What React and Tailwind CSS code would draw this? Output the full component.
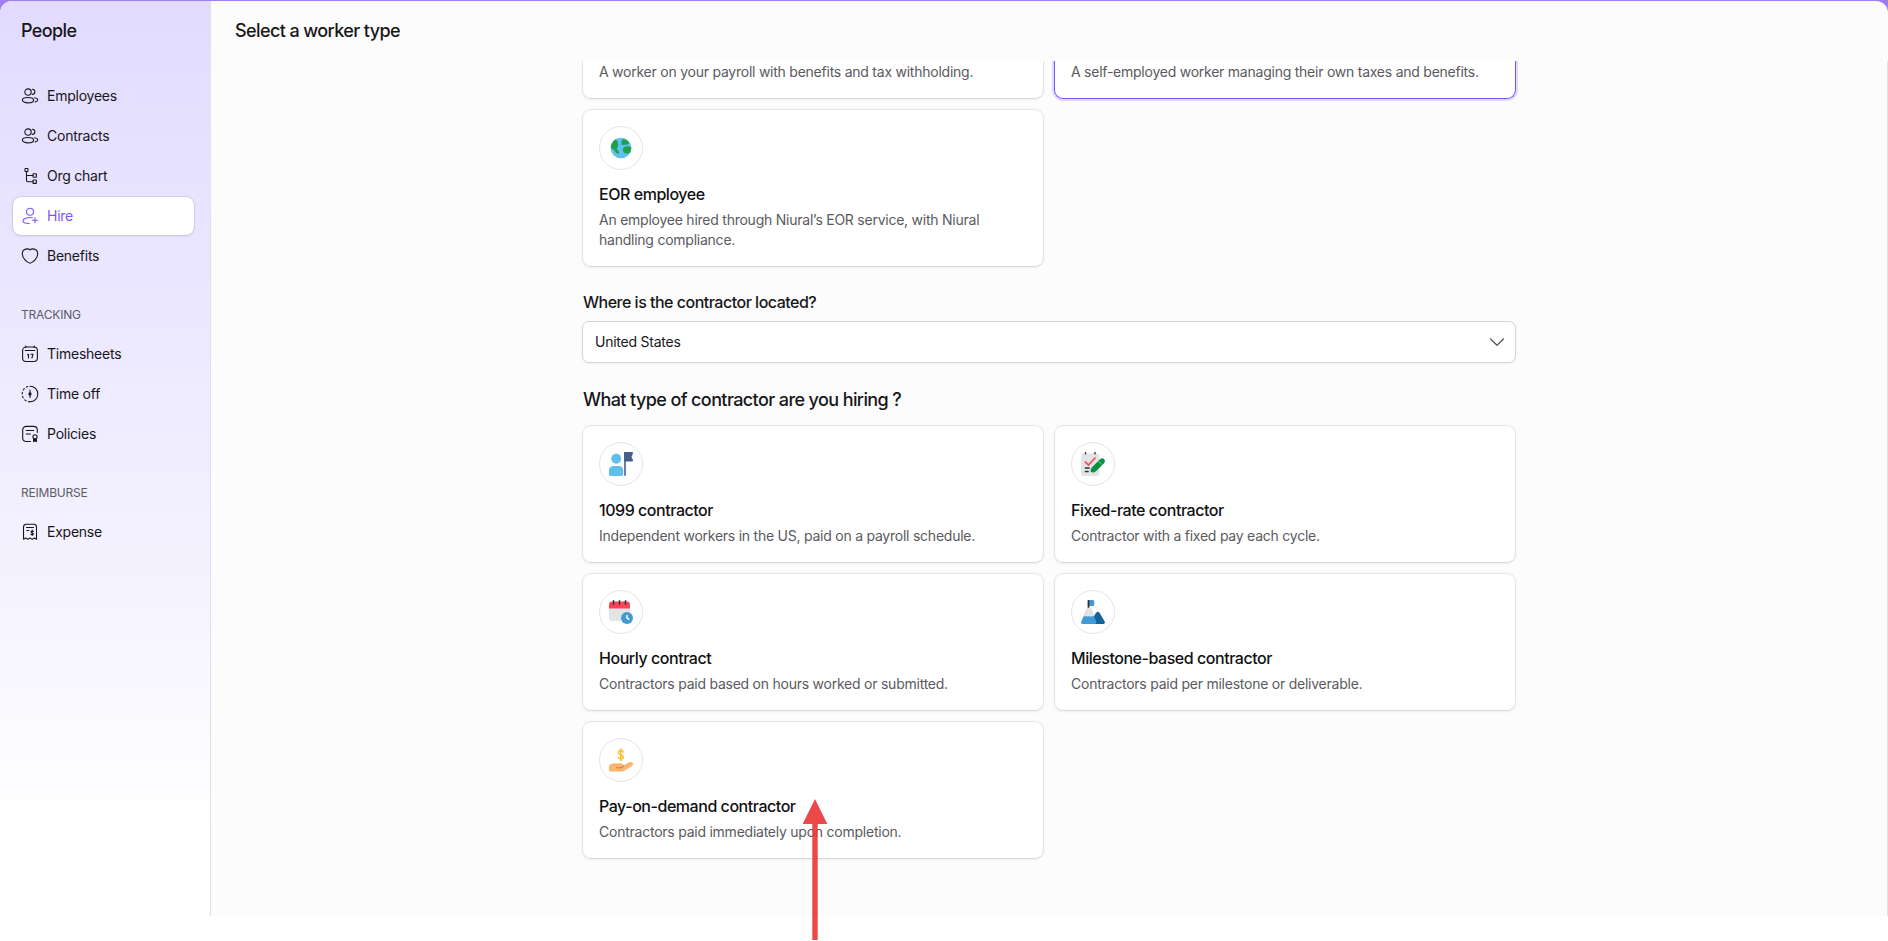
import React from "react";

const StrokeIcon = ({ children }) => (
  <svg
    viewBox="0 0 18 18"
    className="w-[18px] h-[18px] shrink-0"
    fill="none"
    stroke="currentColor"
    strokeWidth="1.1"
    strokeLinecap="round"
    strokeLinejoin="round"
  >
    {children}
  </svg>
);

const PeopleIcon = () => (
  <StrokeIcon>
    <circle cx="7" cy="5.1" r="3.2" />
    <path d="M11.3 2.2a2.6 2.6 0 0 1 0 5.2" />
    <ellipse cx="7" cy="13.2" rx="5.6" ry="2.7" />
    <path d="M13.6 10.8c1.9.3 3.1 1.1 3.1 2.1s-1 1.7-2.6 2" />
  </StrokeIcon>
);

const OrgIcon = () => (
  <StrokeIcon>
    <rect x="4" y="1.5" width="3" height="3" rx=".5" />
    <rect x="12" y="6.8" width="3.4" height="3.4" rx=".5" />
    <rect x="12" y="13" width="3.4" height="3.4" rx=".5" />
    <path d="M5.5 4.5v8.7c0 1 .5 1.5 1.5 1.5h5M5.5 8.5H12" />
  </StrokeIcon>
);

const HireIcon = () => (
  <StrokeIcon>
    <circle cx="9" cy="4.7" r="3.5" />
    <path d="M11.4 10.8a9 9 0 0 0-2.4-.3c-3.9 0-7.1 1.7-7.1 3.6 0 1.6 2.2 2.4 6.4 2.4" />
    <path d="M14 10.6v5.2M11.4 13.2h5.2" />
  </StrokeIcon>
);

const HeartIcon = () => (
  <StrokeIcon>
    <path d="M9 3C7.6 1.4 1.5 1 1.3 6.7c-.1 4.6 4.6 8.6 7.7 9.6 3.1-1 7.8-5 7.7-9.6C16.5 1 10.4 1.4 9 3z" />
  </StrokeIcon>
);

const CalendarIcon = () => (
  <StrokeIcon>
    <rect x="1.6" y="2" width="14.8" height="14.5" rx="3.5" />
    <path d="M4.8 1v1.5M13.2 1v1.5M4.2 5.5h9.6" />
    <path d="M6.5 9.7l1-.5v3.8M10 9.2h2l-1.1 3.8" />
  </StrokeIcon>
);

const TimeOffIcon = () => (
  <StrokeIcon>
    <path d="M9 1.2a7.8 7.8 0 0 1 0 15.6" />
    <path d="M9 16.8A7.8 7.8 0 0 1 9 1.2" strokeDasharray="1.6 2.5" />
    <path d="M9 5v7.5" />
    <circle cx="9" cy="9" r="1.1" fill="currentColor" />
  </StrokeIcon>
);

const PolicyIcon = () => (
  <StrokeIcon>
    <path d="M9.5 16.5h-4C3 16.5 1.7 15.300 1.7 13V5c0-2.400 1.300-3.600 3.800-3.600h7c2.500 0 3.800 1.200 3.800 3.600v2.500" />
    <path d="M5.3 5.500h7.400M5.300 9h4.200" />
    <circle cx="14" cy="11.8" r="2.1" />
    <path d="M12.6 13.800v2.800l1.400-.8 1.400.8v-2.800" fill="currentColor" />
  </StrokeIcon>
);

const ExpenseIcon = () => (
  <StrokeIcon>
    <path d="M2.5 16.200v-12c0-1.900 1-2.900 2.900-2.900h7.200c1.900 0 2.900 1 2.900 2.900v12l-2.100-1.200-2.200 1.400L9 15l-2.200 1.400L4.600 15z" />
    <path d="M5.500 4.500h7M5.800 7.500h2" />
    <path d="M12.300 8.300c-.5-.6-2.300-.5-2.300.5 0 1.200 2.400.7 2.400 2 0 1.100-1.900 1.200-2.500.4M11.200 7v5.400" />
  </StrokeIcon>
);

const GlobeArt = () => (
  <svg viewBox="0 0 24 24" className="w-6 h-6">
    <circle cx="12" cy="12" r="10.3" fill="#5fc0ee" />
    <path
      d="M6.800 3.200C3.800 5 1.900 8 1.700 11.500c.8 1.500 3 1.600 3.800 3 .8 1.300 1.600 3.200 3.800 3.500.9.100 1-2-.1-3.200-.8-1-1.800-1.800-1-3 .6-.8 1.300-2.100.8-4-.2-1.300-.7-3.600-2.200-4.600z"
      fill="#1fa149"
    />
    <path
      d="M14 3.300c-1.400.7-1.600 2.800-1.500 4.400.1 1.400 1.400 1.600 3 1.200 1.700-.5 3.700-.2 5-1.300-1-2.300-3.500-4.600-6.500-4.300z"
      fill="#1fa149"
    />
    <path
      d="M17.800 10.200c-2.400 0-4 1.800-4 3.600 0 2.100 1.700 3.700 4 3.700 1 0 2.200.2 3-.6 1-1.700 1.600-3.700 1.400-6-1.200-.5-2.700-.7-4.400-.7z"
      fill="#1fa149"
    />
  </svg>
);

const PersonFlagArt = () => (
  <svg viewBox="0 0 24 24" className="w-6 h-6">
    <circle cx="7.2" cy="6.8" r="5" fill="#5fc0ee" />
    <path
      d="M0 18.500C0 15.500 1.800 14 4.500 14h5.200c2.700 0 4.500 1.500 4.500 4.500V22c0 1.300-.7 2-2 2H2c-1.300 0-2-.7-2-2z"
      fill="#5fc0ee"
    />
    <rect x="15" y="0" width="2" height="24" rx="1" fill="#6b80a6" />
    <path
      d="M15 1c0-.6.400-1 1-1h7c1 0 1.300.8.900 1.500L22.500 5 24 8.200c.3.700-.1 1.300-.8 1.300H15z"
      fill="#455f8c"
    />
  </svg>
);

const ChecklistArt = () => (
  <svg viewBox="0 0 24 24" className="w-6 h-6" fill="none" strokeLinecap="round">
    <rect x="0" y="1.5" width="18.5" height="22.5" rx="3" fill="#e2e4e6" />
    <path d="M4.500.8v1M14 .8v1" stroke="#2d3138" strokeWidth="1.5" />
    <path d="M4.300 9.800L7.500 13l6.500-7" stroke="#f5495c" strokeWidth="1.7" />
    <path d="M4.500 16h3.500M4.500 19.500H7" stroke="#2d3138" strokeWidth="1.7" />
    <path
      d="M9.800 19.800c-.4-2 .2-3.600 1.500-4.900l7.500-7.400c1.400-1.400 3-1.600 4.300-.3s1.100 2.900-.3 4.300l-7.500 7.400c-1.400 1.300-3.300 2.100-5.500.9z"
      fill="#0b8f45"
    />
    <path d="M17.300 9l3.800 3.800" stroke="#1fbf68" strokeWidth="1.5" strokeLinecap="butt" />
  </svg>
);

const HourlyArt = () => (
  <svg viewBox="0 0 24 24" className="w-6 h-6" fill="none" strokeLinecap="round">
    <path d="M0 8h21v10c0 2-1 3-3 3H3c-2 0-3-1-3-3z" fill="#e2e4e6" />
    <path d="M0 8.500v-4c0-2 1-3 3-3h15c2 0 3 1 3 3v4z" fill="#ff4356" />
    <path d="M4.500.8v3.400M10.500.8v3.400M16.500.8v3.400" stroke="#2d3138" strokeWidth="1.5" />
    <circle cx="18" cy="18" r="6" fill="#4299d3" />
    <path d="M18 15.500V18l1.800 1.200" stroke="#fff" strokeWidth="1.5" />
  </svg>
);

const MilestoneArt = () => (
  <svg viewBox="0 0 24 24" className="w-6 h-6">
    <path
      d="M12 24l-.5-5 3.200-5.800c1.200-2.100 3-2.100 4.100 0l4.700 8c.9 1.600.2 2.800-1.600 2.800z"
      fill="#14629b"
    />
    <path
      d="M.4 21.300L5.300 10c1.200-3 3.800-3 5.200 0l4.600 11.200c.6 1.700-.1 2.800-1.700 2.800H2C.3 24-.4 22.900.4 21.300z"
      fill="#4299d3"
    />
    <path
      d="M5.300 9.500c1.200-3 3.800-3 5.200 0l2.600 6.300c-.7.800-1.900.8-2.700.1-.7.900-1.800.9-2.600.1-.8.800-1.900.8-2.600-.1-.7.600-1.700.7-2.500 0z"
      fill="#e2e4e6"
    />
    <path d="M8 0h3.500c1.300 0 1.700.6 1.700 1.500v3c0 .9-.4 1.500-1.700 1.500H8z" fill="#4299d3" />
    <path d="M6.600.8c0-1 1.800-1 1.800 0v7H6.600z" fill="#2d3138" />
  </svg>
);

const HandCoinArt = () => (
  <svg viewBox="0 0 24 24" className="w-6 h-6" fill="none">
    <path
      d="M14.200 4.500c0-1.100-1-1.900-2.400-1.900s-2.500.8-2.500 2c0 2.700 5 1.500 5 4.200 0 1.300-1.100 2-2.500 2s-2.600-.8-2.600-2M11.800.3v12.600"
      stroke="#fbc02d"
      strokeWidth="1.5"
    />
    <path
      d="M0 18c1.500-2.200 3.700-3 6-2.600 2.200.4 5-.5 6.800.2 1 .4 1.700 1.400 1.600 2l5.600-3.200c1.400-.8 3.500-.4 3.900 1.100.3 1.200-.4 2.100-1.700 2.900l-5.500 3.600c-1.500 1-3 1.600-5 1.600H1.500C.5 23.600 0 23 0 22z"
      fill="#fbb570"
    />
    <path d="M7.500 19.700c2.500.3 5.700.8 7.200-2" stroke="#c98350" strokeWidth="1.1" strokeLinecap="round" />
  </svg>
);

const sections = [
  {
    items: [
      { label: "Employees", icon: PeopleIcon },
      { label: "Contracts", icon: PeopleIcon },
      { label: "Org chart", icon: OrgIcon },
      { label: "Hire", icon: HireIcon, active: true },
      { label: "Benefits", icon: HeartIcon },
    ],
  },
  {
    title: "TRACKING",
    items: [
      { label: "Timesheets", icon: CalendarIcon },
      { label: "Time off", icon: TimeOffIcon },
      { label: "Policies", icon: PolicyIcon },
    ],
  },
  {
    title: "REIMBURSE",
    items: [{ label: "Expense", icon: ExpenseIcon }],
  },
];

const contractorTypes = [
  {
    title: "1099 contractor",
    text: "Independent workers in the US, paid on a payroll schedule.",
    art: PersonFlagArt,
  },
  {
    title: "Fixed-rate contractor",
    text: "Contractor with a fixed pay each cycle.",
    art: ChecklistArt,
  },
  {
    title: "Hourly contract",
    text: "Contractors paid based on hours worked or submitted.",
    art: HourlyArt,
  },
  {
    title: "Milestone-based contractor",
    text: "Contractors paid per milestone or deliverable.",
    art: MilestoneArt,
  },
  {
    title: "Pay-on-demand contractor",
    text: "Contractors paid immediately upon completion.",
    art: HandCoinArt,
  },
];

const Sidebar = () => (
  <aside className="w-[211px] h-[915px] shrink-0 border-r border-[#e2dfec] bg-linear-to-b from-[#e2dbff] from-0% via-[#f4f1ff] via-60% to-white to-90%">
    <h2 className="pl-[21px] pt-[18px] text-[18px] leading-6 font-medium tracking-[-0.6px] text-[#17171a]">
      People
    </h2>
    <nav className="pt-[33px] pl-3 pr-[15px]">
      {sections.map((section, idx) => (
        <div key={idx} className="mb-[29px]">
          {section.title && (
            <div className="pl-[9px] h-[29px] text-xs leading-5 tracking-[-0.2px] text-[#5c5b63]">
              {section.title}
            </div>
          )}
          {section.items.map((item) => (
            <a
              key={item.label}
              className={
                item.active
                  ? "flex items-center h-10 gap-2 pl-2 rounded-[9px] bg-white bg-clip-padding border border-[#d2cbe9] text-sm tracking-[-0.24px] text-[#7c55fb] shadow-[0_1px_2px_rgba(0,0,0,0.06)]"
                  : "flex items-center h-10 gap-2 pl-[9px] text-sm tracking-[-0.24px] text-[#17171a]"
              }
            >
              <item.icon />
              <span>{item.label}</span>
            </a>
          ))}
        </div>
      ))}
    </nav>
  </aside>
);

const TypeCard = ({ title, text, art: Art }) => (
  <div className="bg-white border border-[#e4e4e5] border-b-[#d8d8d9] rounded-[9px] p-4 shadow-[0_1px_3px_rgba(0,0,0,0.05)]">
    <div className="w-11 h-11 rounded-full border border-[#e4e4e5] flex items-center justify-center">
      <Art />
    </div>
    <h3 className="mt-3 text-base leading-6 font-medium tracking-[-0.46px] text-[#111113]">{title}</h3>
    <p className="mt-1 text-sm leading-5 tracking-[-0.24px] text-[#5a5a60]">{text}</p>
  </div>
);

const App = () => {
  return (
    <div className="relative w-full h-[941px] overflow-hidden bg-white font-['Inter',sans-serif]">
      <div className="bg-[#9d7ff0] pt-px">
        <div className="flex h-[915px] rounded-t-[12px] overflow-hidden bg-[#fcfcfc]">
          <Sidebar />

          <main className="flex-1 flex flex-col">
            <h1 className="h-[60px] pl-6 pt-[18px] text-[18px] leading-6 font-medium tracking-[-0.6px] text-[#17171a]">
              Select a worker type
            </h1>

            <div className="flex-1 overflow-hidden border-r border-[#e3e3e4]">
              <div className="w-[934px] ml-[371px]">
                {/* Worker types, scrolled under the header */}
                <div className="grid grid-cols-2 gap-[10px]">
                  <div className="h-[38px] bg-white border border-t-0 border-[#e4e4e5] border-b-[#d8d8d9] rounded-b-[9px] px-4 pt-px shadow-[0_1px_3px_rgba(0,0,0,0.05)]">
                    <p className="text-sm leading-5 tracking-[-0.24px] text-[#5a5a60]">
                      A worker on your payroll with benefits and tax withholding.
                    </p>
                  </div>
                  <div className="h-[38px] bg-white border border-t-0 border-[#7c55fb] rounded-b-[9px] px-4 pt-px shadow-[0_0_0_2px_#e2daff]">
                    <p className="text-sm leading-5 tracking-[-0.24px] text-[#5a5a60]">
                      A self-employed worker managing their own taxes and benefits.
                    </p>
                  </div>
                  <TypeCard
                    title="EOR employee"
                    text="An employee hired through Niural’s EOR service, with Niural handling compliance."
                    art={GlobeArt}
                  />
                </div>

                <label className="block pl-px mt-[23px] text-base leading-6 font-medium tracking-[-0.5px] text-[#17171a]">
                  Where is the contractor located?
                </label>
                <div className="mt-[7px] h-[42px] flex items-center justify-between rounded-[7px] border border-[#d4d4d6] bg-white pl-3 pr-2 shadow-[0_1px_3px_rgba(0,0,0,0.05)]">
                  <span className="text-sm tracking-[-0.24px] text-[#17171a]">United States</span>
                  <svg
                    viewBox="0 0 20 20"
                    className="w-5 h-5"
                    fill="none"
                    stroke="#55555b"
                    strokeWidth="1.3"
                    strokeLinecap="round"
                    strokeLinejoin="round"
                  >
                    <path d="M3.500 7l6.500 6.300L16.500 7" />
                  </svg>
                </div>

                <h2 className="pl-px mt-6 text-[18px] leading-[26px] font-medium tracking-[-0.6px] text-[#17171a]">
                  What type of contractor are you hiring ?
                </h2>
                <div className="mt-3 grid grid-cols-2 gap-[10px]">
                  {contractorTypes.map((type) => (
                    <TypeCard key={type.title} {...type} />
                  ))}
                </div>
              </div>
            </div>
          </main>
        </div>
      </div>

      {/* Pointer to the pay-on-demand card */}
      <svg viewBox="0 0 26 142" className="absolute left-[802px] top-[799px] w-[26px] h-[142px]">
        <path d="M13 0l12.300 25h-9.600v116h-5.400V25H.7z" fill="#e93434" fillOpacity="0.9" />
      </svg>
    </div>
  );
};

export default App;
